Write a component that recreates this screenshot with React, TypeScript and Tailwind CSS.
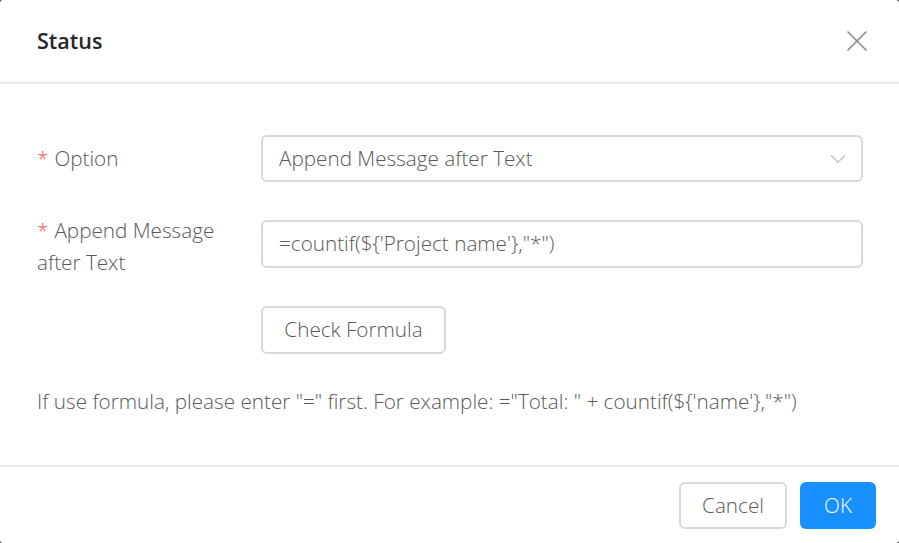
import { X, ChevronDown } from "lucide-react";

export default function App() {
  return (
    <div className="h-[543px] w-[899px] bg-[#3a3a3a]" style={{ fontFamily: '"Open Sans", "Noto Sans", sans-serif' }}>
      <div className="flex h-full w-full flex-col overflow-hidden rounded-[3px] bg-white">
        <div className="flex h-[84px] shrink-0 items-center justify-between border-b-2 border-[#e8e8e8] pl-[37px] pr-[24px]">
          <h1 className="text-[21.5px] font-semibold text-[#262626]">Status</h1>
          <X className="h-[36px] w-[36px] text-[#8c8c8c]" strokeWidth={1.1} />
        </div>

        <div className="flex flex-1 flex-col pl-[37px] pr-[36px] pt-[51px] text-[20.7px] font-light text-[#595959]">
          <div className="flex items-center">
            <label className="w-[224px] shrink-0">
              <span className="mr-[6px] text-[#ff4d4f]">*</span>Option
            </label>
            <div className="flex h-[47px] flex-1 items-center justify-between rounded-[6px] border-2 border-[#d9d9d9] pl-[16px] pr-[10px]">
              <span>Append Message after Text</span>
              <ChevronDown className="h-[26px] w-[26px] text-[#bfbfbf]" strokeWidth={1.1} />
            </div>
          </div>

          <div className="mt-[38px] flex items-start">
            <label className="-mt-[6px] w-[224px] shrink-0 pr-[30px] leading-[32px]">
              <span className="mr-[6px] text-[#ff4d4f]">*</span>Append Message after Text
            </label>
            <div className="flex h-[48px] flex-1 items-center rounded-[6px] border-2 border-[#d9d9d9] pl-[16px]">
              <span>=countif(${"{"}'Project name'{"}"},"*")</span>
            </div>
          </div>

          <div className="mt-[28px] flex">
            <div className="w-[224px] shrink-0" />
            <button className="h-[48px] w-[185px] rounded-[6px] border-2 border-[#d9d9d9] bg-white text-[20.7px] font-light text-[#595959]">
              Check Formula
            </button>
          </div>

          <p className="mt-[32px]">
            If use formula, please enter "=" first. For example: ="Total: " + countif(${"{"}'name'{"}"},"*")
          </p>
        </div>

        <div className="flex h-[78px] shrink-0 items-start justify-end gap-[13px] border-t-2 border-[#e8e8e8] pr-[23px] pt-[15px]">
          <button className="h-[47px] w-[108px] rounded-[6px] border-2 border-[#d9d9d9] bg-white text-[20.7px] font-light text-[#595959]">
            Cancel
          </button>
          <button className="h-[47px] w-[76px] rounded-[6px] bg-[#1890ff] text-[20.7px] font-light text-white">
            OK
          </button>
        </div>
      </div>
    </div>
  );
}
